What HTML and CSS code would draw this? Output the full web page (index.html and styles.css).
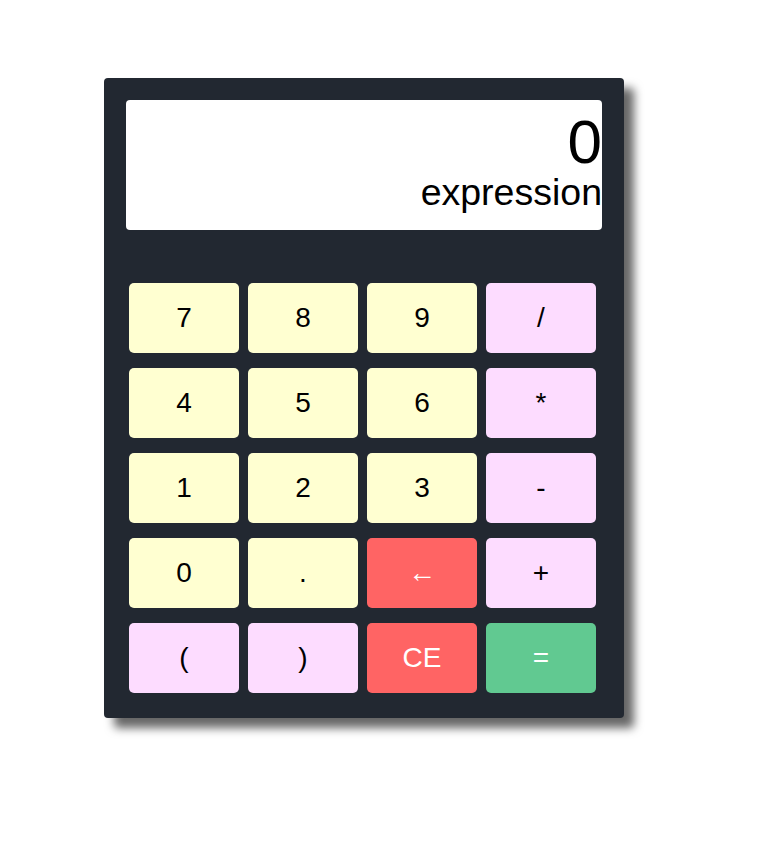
FILE: index.html
```html
<!DOCTYPE html>
<html>
<head>
<meta charset="utf-8">
<link rel="stylesheet" href="styles.css">
</head>
<body>
<div class="calc">
  <div class="display">
    <div class="result">0</div>
    <div class="expr">expression</div>
  </div>
  <div class="keys">
    <button class="key num">7</button>
    <button class="key num">8</button>
    <button class="key num">9</button>
    <button class="key op">/</button>
    <button class="key num">4</button>
    <button class="key num">5</button>
    <button class="key num">6</button>
    <button class="key op">*</button>
    <button class="key num">1</button>
    <button class="key num">2</button>
    <button class="key num">3</button>
    <button class="key op">-</button>
    <button class="key num">0</button>
    <button class="key num">.</button>
    <button class="key del">←</button>
    <button class="key op">+</button>
    <button class="key op">(</button>
    <button class="key op">)</button>
    <button class="key del">CE</button>
    <button class="key eq">=</button>
  </div>
</div>
</body>
</html>
```
FILE: styles.css
```css
html, body {
  margin: 0;
  padding: 0;
  background: #ffffff;
  font-family: "Liberation Sans", Arial, sans-serif;
}
body {
  padding: 78px 0 120px 104px;
}
.calc {
  width: 520px;
  height: 640px;
  box-sizing: border-box;
  background: #222831;
  border-radius: 4px;
  box-shadow: 10px 10px 10px rgba(0, 0, 0, 0.6);
  padding: 22px 22px 0 22px;
}
.display {
  height: 130px;
  background: #ffffff;
  border-radius: 4px;
  text-align: right;
  display: flex;
  flex-direction: column;
  align-items: flex-end;
  color: #000;
}
.result {
  font-size: 62px;
  line-height: 64px;
  margin-top: 10px;
  height: 62px;
}
.expr {
  font-size: 37.5px;
  line-height: 40px;
}
.keys {
  display: grid;
  grid-template-columns: repeat(4, 110px);
  grid-auto-rows: 70px;
  column-gap: 9px;
  row-gap: 15px;
  margin-top: 53px;
  margin-left: 3px;
}
.key {
  border: none;
  border-radius: 5px;
  font-family: "Liberation Sans", Arial, sans-serif;
  font-size: 28px;
  color: #000;
  padding: 0;
  margin: 0;
  display: flex;
  align-items: center;
  justify-content: center;
}
.num { background: #ffffd1; }
.op { background: #fddcff; }
.del { background: #ff6464; color: #fff; }
.eq { background: #61c991; color: #fff; }
```
